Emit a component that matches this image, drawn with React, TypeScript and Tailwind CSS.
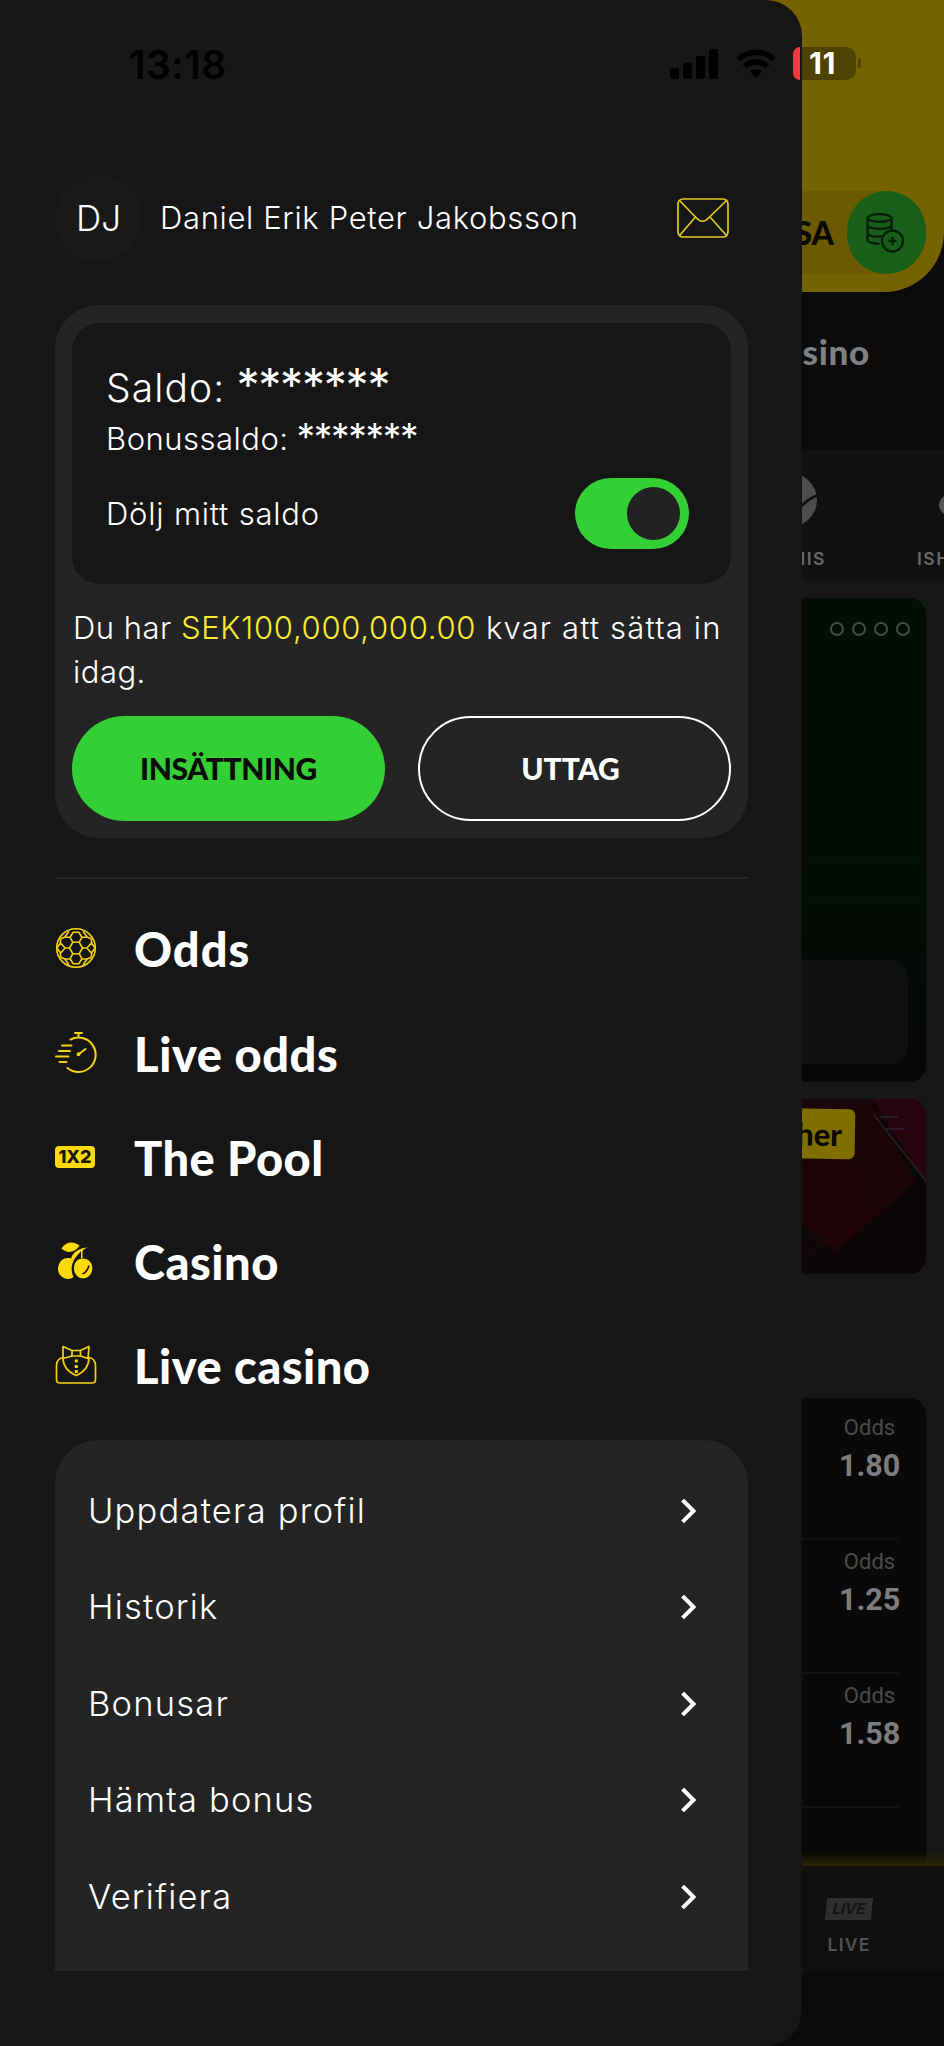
import { useState } from "react";
import type { ReactNode } from "react";

type NavItem = {
  label: string;
  icon: ReactNode;
  className: string;
};

function MailIcon() {
  return (
    <svg width="52" height="40" viewBox="0 0 52 40" fill="none" stroke="#e3c81c" strokeWidth="1.7">
      <rect x="1" y="1" width="50" height="38" rx="5" />
      <path d="M2.500 2.500 19 19.500q6.500 7.500 13 0L49.500 2.500M18.500 19 2.500 37.500M33 19l16.500 18.500" />
    </svg>
  );
}

function BallIcon() {
  return (
    <svg width="42" height="42" viewBox="0 0 42 42" fill="none" stroke="#f2d210" strokeWidth="1.6" strokeLinejoin="round">
      <circle cx="21" cy="21" r="19.300" />
      <path d="M17.800 15.300h6.400l3.300 5.700-3.300 5.700h-6.400L14.500 21z" />
      <path d="M17.800 15.300 15 10.200l3.200-5h5.600l3.200 5-2.800 5.100M15 10.200l-5.200-.2L5.500 12M27 10.200l5.200-.2 4.300 2M9.800 10 14 4.200M32.200 10 28 4.200" />
      <path d="M17.800 26.700 15 31.800l3.200 5h5.600l3.200-5-2.800-5.100M15 31.800l-5.200.2L5.500 30M27 31.800l5.200.2 4.300-2M9.800 32 14 37.800M32.200 32l-4.200 5.800" />
      <path d="M14.500 21H10l-4.500-5M27.500 21H32l4.500-5M10 21l-4.500 5.300M32 21l4.500 5.300M5.500 12v4L2 21l3.500 5v4M36.500 12v4l3.500 5-3.500 5v4" />
    </svg>
  );
}

function StopwatchIcon() {
  return (
    <svg width="42" height="42" viewBox="0 0 42 42" fill="none" stroke="#f2d210" strokeWidth="2" strokeLinecap="round">
      <path d="M20 2h7M23.500 2v4M15.500 8.500a17.200 17.200 0 1 1-3 28.500" />
      <path d="M7 14.500h9.500M4 20h11M1 25.500h12.500M4.500 31h7M24 23l6.500-5" />
      <circle cx="23.500" cy="23.300" r="1" fill="#f2d210" />
    </svg>
  );
}

function PoolIcon() {
  return (
    <div className="flex h-[22px] w-10 items-center justify-center rounded-[4px] bg-[#ffd90a] font-['Inter'] text-[18px] leading-none font-extrabold text-[#161616]">
      1X2
    </div>
  );
}

function CherryIcon() {
  return (
    <svg width="42" height="42" viewBox="0 0 42 42" fill="#ffda0a">
      <path d="M6.500 8.500C11 1.500 18 1 24.500 5.500 20.500 12 12.500 14.500 6.500 8.500Z" />
      <path d="M33 7.500c-7.500 0-15 4-17 11l3 1.500c3-5.500 5.500-6.500 7-9V18h1.500v-7c1.500-2 3.500-3 5.500-3.500Z" />
      <path d="M19 20c-4-3-10-2.500-13.200 1.300C1.500 26.500 2.300 34 7.500 37.300c3.700 2.300 8.500 2 11-.3-2.700-5.500-2.500-11.500.5-17Z" />
      <path d="M27.500 18.500c6 0 9.800 4.200 9.800 9.700s-4 10.100-9.300 10.100-9-4.600-9-10.100c0-5.500 3.500-9.700 8.500-9.700Z" />
      <path d="M34 25.500c-1 4-3 7-6.500 8.500" stroke="#161616" strokeWidth="1.600" fill="none" />
    </svg>
  );
}

function TuxedoIcon() {
  return (
    <svg width="42" height="42" viewBox="0 0 42 42" fill="none" stroke="#f2d210" strokeWidth="1.700" strokeLinejoin="round">
      <path d="M8 2.500 17 6.500h8.500l8.500-4-1 12-7.500-2.500H17l-9 2.500zM17 6.500V12M25.500 6.500V12" />
      <path d="M8 13.500C5 13.500 1.500 17 1.500 21v14.500q0 3.500 3.500 3.500h32q3.500 0 3.500-3.500V21c0-4-3.500-7.500-6.500-7.500M8 13.500c0 8.500 5 14.500 13.300 18C29 28 34 22 34 13.500" />
      <path d="M21.300 15.500v3M21.300 21v3M21.300 26v3" strokeWidth="3" />
    </svg>
  );
}

function CoinsIcon() {
  return (
    <svg width="38" height="40" viewBox="0 0 38 40" fill="none" stroke="#06200a" strokeWidth="2.300" className="-ml-1">
      <ellipse cx="13.500" cy="5" rx="12" ry="3.800" />
      <path d="M1.500 5v22c0 2 5 3.800 12 3.800M25.500 5v12M1.500 12c0 5 24 5 24 0M1.500 19.500c0 4 10 5 16 3.500" />
      <circle cx="26.500" cy="28" r="10.500" />
      <path d="M26.500 24v8M22.500 28h8" />
    </svg>
  );
}

function Chevron() {
  return (
    <svg width="18" height="28" viewBox="0 0 18 28" fill="none" stroke="#fff" strokeWidth="4" strokeLinecap="square">
      <path d="m4 4.500 9.500 9.500L4 23.500" />
    </svg>
  );
}

const navItems: NavItem[] = [
  { label: "Odds", icon: <BallIcon />, className: "tracking-[1px]" },
  { label: "Live odds", icon: <StopwatchIcon />, className: "pt-[5px] tracking-[0.6px]" },
  { label: "The Pool", icon: <PoolIcon />, className: "tracking-[0.5px]" },
  { label: "Casino", icon: <CherryIcon />, className: "tracking-[0.5px]" },
  { label: "Live casino", icon: <TuxedoIcon />, className: "tracking-[0.5px]" },
];

const menuItems = ["Uppdatera profil", "Historik", "Bonusar", "Hämta bonus", "Verifiera"];

const oddsRows = ["1.80", "1.25", "1.58"];

function StatusBar() {
  return (
    <div className="absolute inset-x-0 top-[46px] z-20 flex h-9 items-center font-['Inter']">
      <div className="ml-[129px] w-[541px] text-[39px] leading-none font-semibold tracking-[0.5px] text-black">13:18</div>
      <svg width="48" height="30" viewBox="0 0 48 30" className="shrink-0">
        <rect x="0" y="19" width="9" height="11" rx="2.500" />
        <rect x="13" y="14" width="9" height="16" rx="2.500" />
        <rect x="26" y="7" width="9" height="23" rx="2.500" />
        <rect x="39" y="0" width="9" height="30" rx="2.500" />
      </svg>
      <svg width="40" height="30" viewBox="0 0 40 30" className="ml-[18px] shrink-0" fill="none" stroke="#000" strokeWidth="5.500">
        <path d="M2 10.500c10-9.500 26-9.500 36 0M8.500 17.500c6.500-6 16.500-6 23 0" />
        <path d="m20 29-6-6.500c3.500-3 8.500-3 12 0z" fill="#000" stroke="none" />
      </svg>
      <div className="-mt-[2px] ml-[17px] flex items-center">
        <div className="flex h-[33px] w-[63px] items-center rounded-[10px]">
          <div className="h-full w-[7px] rounded-l-[8px] bg-[#f9383c]" />
          <div className="w-[2px]" />
          <div className="flex h-full flex-1 items-center rounded-r-[10px] bg-[#4d4200] pl-[7px] text-[30px] leading-none font-bold tracking-[0.6px] text-white">
            11
          </div>
        </div>
        <div className="ml-[2px] h-[10px] w-[3px] rounded-r-full bg-[#4d4200]" />
      </div>
    </div>
  );
}

// Only the right edge of the page stays visible while the drawer is open.
function Page() {
  return (
    <div className="flex h-full flex-col overflow-hidden bg-[#161616] pl-[700px]">
      <div className="-ml-[700px] bg-[#0b0b0b]">
        <div className="flex h-[292px] items-start justify-end rounded-br-[60px] bg-[#756200] pt-[191px] pr-[18px]">
          <div className="flex h-[83px] w-[240px] items-center justify-end rounded-full bg-[#6b5a00]">
            <span className="mr-[13px] font-['Lato'] text-[32px] font-black text-[#0b0a00]">SA</span>
            <div className="flex h-[83px] w-[79px] items-center justify-center rounded-full bg-[#18601a]">
              <CoinsIcon />
            </div>
          </div>
        </div>
        <div className="flex h-[158px] justify-end pt-[36px] pr-[74px] font-['Lato'] text-[35px] leading-[46px] font-black tracking-[0.7px] text-[#808080]">
          Casino
        </div>
      </div>
      <div className="-ml-[700px] flex h-[130px] shrink-0 justify-end overflow-hidden bg-[#101010] font-['Inter'] text-[17.500px] font-semibold tracking-[1.5px] text-[#686868]">
        <div className="flex w-[110px] flex-col items-center pt-[23px]">
          <svg width="54" height="54" viewBox="0 0 52 52" className="ml-[1px]">
            <circle cx="26" cy="26" r="26" fill="#4d4d4d" />
            <path d="M30 45c2-11 10-18 23-24" stroke="#101010" strokeWidth="2.500" fill="none" />
          </svg>
          <span className="mt-[18px] leading-7">TENNIS</span>
        </div>
        <div className="w-[73px]" />
        <div className="flex w-[27px] flex-col pt-[45px]">
          <div className="ml-[22px] h-5 w-10 rounded-full bg-[#555]" />
          <span className="mt-[30px] leading-7 whitespace-nowrap">ISH</span>
        </div>
      </div>
      <div className="mt-[18px] mr-[18px] flex h-[484px] shrink-0 flex-col justify-between rounded-2xl bg-linear-to-b from-[#020d05] via-[#020e05] to-[#070807] pb-[18px]">
        <div className="flex justify-end gap-2 pt-6 pr-[16px]">
          {[0, 1, 2, 3].map((dot) => (
            <div key={dot} className="h-[14px] w-[14px] rounded-full border-2 border-[#454b46]" />
          ))}
        </div>
        <div className="mr-[18px] h-[104px] rounded-2xl bg-[#101010]" />
      </div>
      <div className="mt-[17px] mr-[18px] flex h-[175px] shrink-0 justify-between overflow-hidden rounded-2xl bg-[#180508]">
        <div className="z-10 mt-[9px] flex h-[50px] w-[155px] shrink-0 rotate-1 items-center justify-end rounded-[6px] bg-[#806f00] pr-[13px] font-['Lato'] text-[31px] font-black text-[#0c0a00]">
          Higher
        </div>
        <svg width="124" height="175" viewBox="0 0 124 175" className="-ml-[53px] shrink-0">
          <defs>
            <radialGradient id="glow" cx="0.25" cy="0.75" r="0.5">
              <stop offset="0" stopColor="#22040a" />
              <stop offset="1" stopColor="#1a0508" />
            </radialGradient>
            <linearGradient id="shade" x1="0" y1="0" x2="1" y2="1">
              <stop offset="0" stopColor="#170508" />
              <stop offset="0.7" stopColor="#0b0708" />
            </linearGradient>
          </defs>
          <path d="M0 0h124v175H0z" fill="url(#shade)" />
          <path d="M0 0h66l48 82-81 72L0 124z" fill="url(#glow)" />
          <path d="M70 0h54v84z" fill="#250410" />
          <path d="m72 16 52 66M78 18h18M84 30h18" stroke="#28202f" strokeWidth="1.500" />
        </svg>
      </div>
      <div className="mt-[124px] mr-[18px] flex h-[468px] shrink-0 flex-col rounded-tr-2xl bg-[#090909] pt-[8px] pr-[27px] font-['Roboto']">
        {oddsRows.map((odds) => (
          <div key={odds} className="flex h-[134px] shrink-0 flex-col items-end border-b-2 border-[#131313] pt-[7px]">
            <span className="w-[59px] text-center text-[22px] leading-[30px] text-[#4b4b4b]">Odds</span>
            <span className="mt-[5px] w-[60px] text-center text-[30.500px] leading-9 font-bold text-[#7d7d7d]">{odds}</span>
          </div>
        ))}
      </div>
      <div className="-mt-[14px] -ml-[700px] h-[14px] shrink-0 bg-linear-to-b from-transparent to-[#2b2503]" />
      <div className="-ml-[700px] flex h-[106px] shrink-0 justify-end bg-[#0f0f0f] pt-[32px] pr-[70px]">
        <div className="flex w-[50px] flex-col items-center font-['Inter'] text-[#525252]">
          <div className="flex h-[22px] w-[46px] -skew-x-6 items-center justify-center bg-[#2e2e2e] text-[15px] font-bold text-[#141414] italic">
            LIVE
          </div>
          <span className="mt-[11px] text-[17.500px] leading-7 font-semibold tracking-[1.200px]">LIVE</span>
        </div>
      </div>
      <div className="-ml-[700px] flex-1 bg-[#0b0b0b]" />
    </div>
  );
}

function BalanceCard() {
  const [hidden, setHidden] = useState(true);

  return (
    <section className="mt-[43px] h-[533px] rounded-[44px] bg-[#242424] px-[17px] pt-[18px]">
      <div className="h-[261px] rounded-[28px] bg-[#161616] pt-[39px] pr-[42px] pl-[34px]">
        <p className="flex h-[48px] items-baseline gap-[11px] text-[39px] leading-[48px] tracking-[1.1px]">
          Saldo:
          <span className="text-[46px] leading-none font-normal tracking-[-1.2px]">{hidden ? "*******" : "0.00"}</span>
        </p>
        <p className="mt-[8px] flex h-[42px] items-baseline gap-[8px] text-[31px] leading-[42px] tracking-[0.5px]">
          Bonussaldo:
          <span className="text-[37px] leading-none font-normal tracking-[-1.3px]">{hidden ? "*******" : "0.00"}</span>
        </p>
        <div className="mt-[18px] flex h-[71px] items-center justify-between text-[31px] tracking-[0.8px]">
          <span className="pt-[2px]">Dölj mitt saldo</span>
          <button
            type="button"
            role="switch"
            aria-checked={hidden}
            aria-label="Dölj mitt saldo"
            className={`flex h-[71px] w-[114px] items-center rounded-full bg-[#33cf34] px-[9px] ${hidden ? "justify-end" : "justify-start"}`}
            onClick={() => setHidden(!hidden)}
          >
            <span className="h-[53px] w-[53px] rounded-full bg-[#222222]" />
          </button>
        </div>
      </div>
      <p className="mt-[22px] pl-px text-[31px] leading-[44px] tracking-[0.5px] whitespace-nowrap">
        Du har <span className="tracking-[0.7px] text-[#f9ec31]">SEK100,000,000.00</span>
        <span className="tracking-[1.15px]"> kvar att sätta in</span>
        <br />
        idag.
      </p>
      <div className="mt-[22px] flex justify-between font-['Lato'] text-[30px] font-black">
        <button type="button" className="h-[105px] w-[313px] rounded-full bg-[#33cf34] tracking-[-0.4px] text-[#0b0b0b]">
          INSÄTTNING
        </button>
        <button type="button" className="h-[105px] w-[313px] rounded-full border-2 border-white pr-[8px]">
          UTTAG
        </button>
      </div>
    </section>
  );
}

export default function App() {
  return (
    <div className="relative h-[2046px] w-[944px] overflow-hidden font-['Inter',sans-serif]">
      <Page />
      <aside className="absolute top-0 left-0 z-10 h-full w-[802px] rounded-r-[36px] bg-[#161616] pt-[174px] pr-[54px] pl-[55px] font-light text-white">
        <div className="flex h-[88px] items-center">
          <div className="flex h-[87px] w-[87px] items-center justify-center rounded-full bg-[#191919] text-[35px]">DJ</div>
          <span className="ml-[18px] flex-1 text-[31px] tracking-[0.65px] whitespace-nowrap">Daniel Erik Peter Jakobsson</span>
          <span className="mr-[19px]">
            <MailIcon />
          </span>
        </div>
        <BalanceCard />
        <div className="mt-[39px] h-[2px] bg-[#242424]" />
        <nav className="mt-[17px] flex flex-col">
          {navItems.map((item) => (
            <a key={item.label} href="#" className="flex h-[104.250px] items-center">
              <span className="flex w-[79px]">{item.icon}</span>
              <span className={`pt-[3px] font-['Lato'] text-[47px] leading-none font-black ${item.className}`}>{item.label}</span>
            </a>
          ))}
        </nav>
        <div className="mt-[23px] h-[531px] overflow-hidden rounded-t-[44px] bg-[#242424] pt-[22px] pr-[50px] pl-[33px]">
          {menuItems.map((label) => (
            <a key={label} href="#" className="flex h-[96.600px] items-center justify-between text-[34.500px] tracking-[1.2px]">
              {label}
              <Chevron />
            </a>
          ))}
        </div>
      </aside>
      <StatusBar />
    </div>
  );
}
